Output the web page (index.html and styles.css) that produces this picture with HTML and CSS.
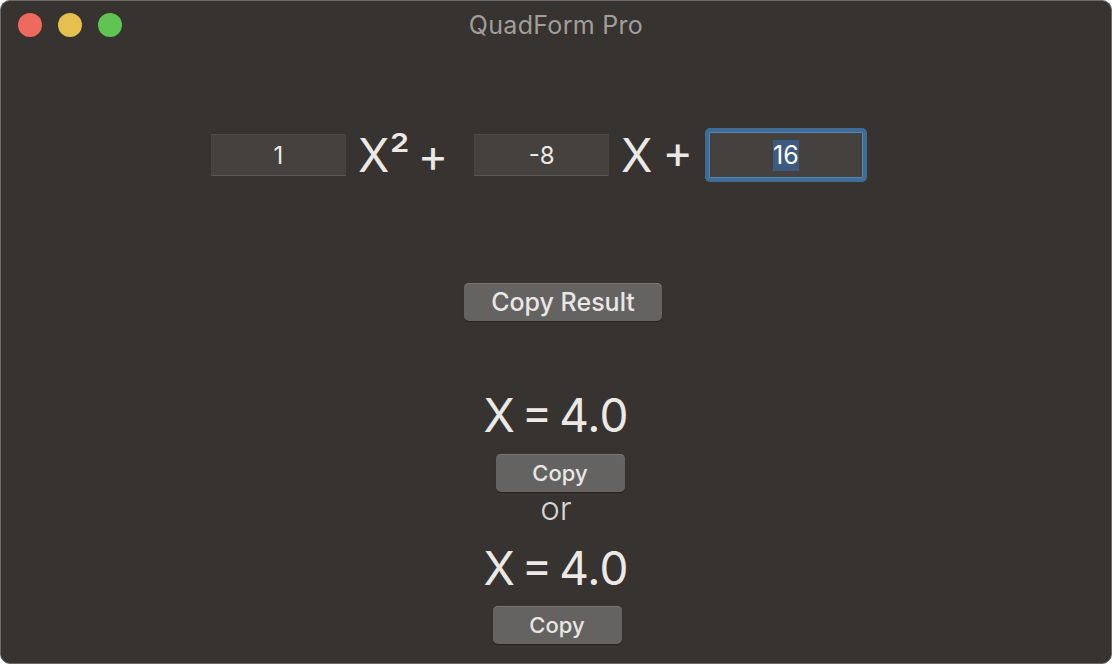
FILE: index.html
```html
<!DOCTYPE html>
<html>
<head>
<meta charset="utf-8">
<link rel="stylesheet" href="styles.css">
</head>
<body>
<div class="window">
  <div class="titlebar">
    <div class="lights">
      <span class="light red"></span>
      <span class="light yellow"></span>
      <span class="light green"></span>
    </div>
    <div class="title">QuadForm Pro</div>
    <div></div>
  </div>
  <div class="content">
    <div class="equation">
      <div class="field">1</div>
      <span class="term term-x2">X² +</span>
      <div class="field">-8</div>
      <span class="term term-x">X +</span>
      <div class="field focused"><span class="sel">16</span></div>
    </div>
    <button class="btn btn-result">Copy Result</button>
    <div class="results">
      <div class="root">X = 4.0</div>
      <button class="btn btn-copy">Copy</button>
      <div class="or">or</div>
      <div class="root root2">X = 4.0</div>
      <button class="btn btn-copy btn-copy2">Copy</button>
    </div>
  </div>
</div>
</body>
</html>
```

FILE: styles.css
```css
html, body {
  margin: 0;
  padding: 0;
  background: #ffffff;
}
body {
  font-family: Inter, "Noto Sans", "Liberation Sans", sans-serif;
}
.window {
  box-sizing: border-box;
  width: 1112px;
  height: 664px;
  background: #363330;
  border: 1px solid #6d6a68;
  border-radius: 10px;
  overflow: hidden;
  display: flex;
  flex-direction: column;
}
.titlebar {
  height: 47px;
  display: grid;
  grid-template-columns: 1fr auto 1fr;
  align-items: center;
}
.lights {
  display: flex;
  gap: 16px;
  padding-left: 17px;
}
.light {
  width: 24px;
  height: 24px;
  border-radius: 50%;
  display: block;
}
.red { background: #ee6a5f; }
.yellow { background: #e5c04f; }
.green { background: #60c452; }
.title {
  color: #a19e9b;
  font-size: 25px;
  font-weight: 400;
  letter-spacing: 0.3px;
}
.content {
  display: flex;
  flex-direction: column;
  align-items: center;
}
.equation {
  align-self: flex-start;
  margin-left: 210px;
  margin-top: 80px;
  display: flex;
  align-items: center;
  height: 54px;
}
.field {
  box-sizing: border-box;
  width: 135px;
  height: 42px;
  background: #45413e;
  border-top: 1px solid #4f4b48;
  border-bottom: 1px solid #5b5855;
  border-left: 1px solid #48443f;
  border-right: 1px solid #48443f;
  color: #ebe9e6;
  font-size: 24px;
  display: flex;
  align-items: center;
  justify-content: center;
}
.field.focused {
  width: 162px;
  height: 54px;
  border: 4px solid #3e6e98;
  border-radius: 5px;
  box-shadow: inset 0 0 0 1px #5a86ad;
  font-size: 25px;
}
.sel {
  background: #3d5a80;
  color: #ffffff;
  padding: 1px 0 2px;
  line-height: 28px;
}
.term {
  color: #ebe9e6;
  font-size: 46px;
  line-height: 1;
  white-space: nowrap;
}
.term-x2 {
  word-spacing: -5px;
  margin-left: 12px;
  margin-right: 26px;
}
.term-x {
  word-spacing: -3px;
  margin-left: 12px;
  margin-right: 12px;
}
.btn {
  font-family: Inter, "Noto Sans", "Liberation Sans", sans-serif;
  background: #656361;
  color: #e9e7e5;
  border: none;
  border-radius: 5px;
  box-shadow: 0 1px 0 #787674 inset, 0 1px 1px rgba(0,0,0,0.35);
  padding: 0;
  display: flex;
  align-items: center;
  justify-content: center;
}
.btn-result {
  margin-top: 101px;
  margin-left: 14px;
  width: 198px;
  height: 38px;
  font-size: 25px;
  font-weight: 500;
}
.results {
  margin-top: 66px;
  display: flex;
  flex-direction: column;
  align-items: center;
}
.root {
  color: #ebe9e6;
  font-size: 46px;
  line-height: 56px;
  font-weight: 400;
  word-spacing: -6px;
}
.btn-copy {
  margin-top: 11px;
  margin-left: 8px;
  width: 129px;
  height: 38px;
  font-size: 22px;
  font-weight: 500;
}
.or {
  color: #d8d6d3;
  font-size: 33px;
  font-weight: 300;
  line-height: 32px;
  margin-top: 0px;
}
.root2 {
  margin-top: 16px;
}
.btn-copy2 {
  margin-left: 2px;
  margin-top: 10px;
}
```
